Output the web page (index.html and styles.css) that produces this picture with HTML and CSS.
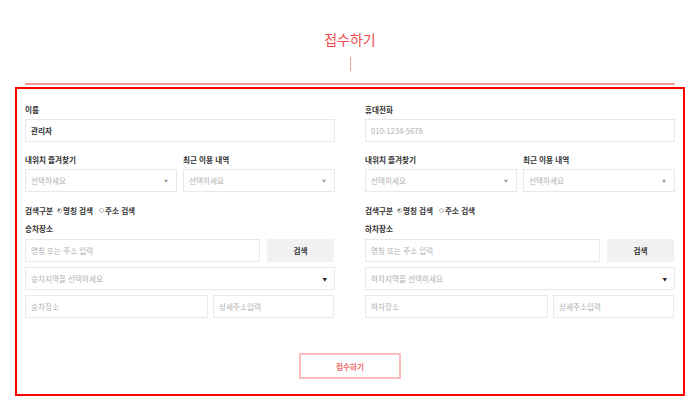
FILE: index.html
```html
<!DOCTYPE html>
<html lang="ko">
<head>
<meta charset="utf-8">
<title>접수하기</title>
<link rel="stylesheet" href="styles.css">
</head>
<body>
<div class="header">
  <h1 class="title">접수하기</h1>
  <div class="vline"></div>
  <div class="hline"></div>
</div>
<form class="box">
  <div class="columns">
    <div class="col">
      <div class="label">이름</div>
      <input class="field name" type="text" value="관리자">
      <div class="pair">
        <div>
          <div class="label mt12">내위치 즐겨찾기</div>
          <div class="select"><span class="ph">선택하세요</span><span class="arr">▼</span></div>
        </div>
        <div>
          <div class="label mt12">최근 이용 내역</div>
          <div class="select"><span class="ph">선택하세요</span><span class="arr">▼</span></div>
        </div>
      </div>
      <div class="radios">
        <span class="rlabel">검색구분</span>
        <span class="radio on"></span><span>명칭 검색</span>
        <span class="radio second"></span><span>주소 검색</span>
      </div>
      <div class="label mt7">승차장소</div>
      <div class="search">
        <input class="field" type="text" placeholder="명칭 또는 주소 입력">
        <button type="button" class="sbtn">검색</button>
      </div>
      <div class="select big"><span class="ph">승차지역을 선택하세요</span><span class="arr dark">▼</span></div>
      <div class="addr">
        <input class="field" type="text" placeholder="승차장소">
        <input class="field" type="text" placeholder="상세주소입력">
      </div>
    </div>
    <div class="col">
      <div class="label">휴대전화</div>
      <input class="field" type="text" placeholder="010-1234-5678">
      <div class="pair">
        <div>
          <div class="label mt12">내위치 즐겨찾기</div>
          <div class="select"><span class="ph">선택하세요</span><span class="arr">▼</span></div>
        </div>
        <div>
          <div class="label mt12">최근 이용 내역</div>
          <div class="select"><span class="ph">선택하세요</span><span class="arr">▼</span></div>
        </div>
      </div>
      <div class="radios">
        <span class="rlabel">검색구분</span>
        <span class="radio on"></span><span>명칭 검색</span>
        <span class="radio second"></span><span>주소 검색</span>
      </div>
      <div class="label mt7">하차장소</div>
      <div class="search">
        <input class="field" type="text" placeholder="명칭 또는 주소 입력">
        <button type="button" class="sbtn">검색</button>
      </div>
      <div class="select big"><span class="ph">하차지역을 선택하세요</span><span class="arr dark">▼</span></div>
      <div class="addr">
        <input class="field" type="text" placeholder="하차장소">
        <input class="field" type="text" placeholder="상세주소입력">
      </div>
    </div>
  </div>
  <div class="submit-wrap">
    <button type="button" class="submit">접수하기</button>
  </div>
</form>
</body>
</html>
```

FILE: styles.css
```css
* { box-sizing: border-box; }
html, body { margin: 0; padding: 0; background: #fff; }
body {
  font-family: "Noto Sans CJK KR", "Noto Sans", sans-serif;
  color: #333;
  width: 700px;
}
.header {
  display: flex;
  flex-direction: column;
  align-items: center;
  padding-top: 29px;
}
.title {
  margin: 0;
  font-size: 14px;
  line-height: 20px;
  font-weight: 400;
  color: #ef4a4f;
}
.vline {
  width: 1px;
  height: 14px;
  margin-top: 8px;
  background: #f2a0a0;
}
.hline {
  align-self: stretch;
  margin: 12px 25px 0;
  height: 2px;
  background: #f59b9b;
}
.box {
  margin: 2px 15px 0;
  border: 2px solid #ff0000;
  padding: 15px 8px 15px;
  height: 309px;
}
.columns {
  display: grid;
  grid-template-columns: 310px 310px;
  column-gap: 30px;
}
.col { display: flex; flex-direction: column; }
.label {
  font-size: 7.6px;
  line-height: 12px;
  font-weight: 700;
  color: #333;
  margin-bottom: 3px;
}
.mt12 { margin-top: 12px; }
.mt7 { margin-top: 7px; margin-bottom: 4px; }
.field {
  display: block;
  width: 100%;
  height: 23px;
  border: 1px solid #e8e8e8;
  padding: 0 5px;
  font-family: inherit;
  font-size: 7.6px;
  color: #333;
  outline: none;
  background: #fff;
  margin: 0;
}
.field::placeholder { color: #b0b0b0; }
.field.name { font-weight: 700; color: #333; }
.pair {
  display: grid;
  grid-template-columns: 1fr 1fr;
  column-gap: 6px;
}
.select {
  display: flex;
  align-items: center;
  justify-content: space-between;
  height: 23px;
  border: 1px solid #e8e8e8;
  padding: 0 5px 0 5px;
  font-size: 7.6px;
}
.ph { color: #b0b0b0; }
.arr {
  font-size: 4px;
  color: #999;
  padding-right: 3px;
}
.arr.dark {
  font-size: 4.5px;
  color: #222;
  padding-right: 2px;
}
.radios {
  display: flex;
  align-items: center;
  margin-top: 12px;
  height: 12px;
  font-size: 7.6px;
  font-weight: 700;
  color: #333;
}
.rlabel { margin-right: 2px; }
.radio {
  width: 5px;
  height: 5px;
  border: 1px solid #b5b5b5;
  border-radius: 50%;
  margin: 0 1px 0 2px;
  background: #fff;
  position: relative;
}
.radio.second { margin-left: 6px; }
.radio.on::after {
  content: "";
  position: absolute;
  left: 0.5px;
  top: 0.5px;
  width: 2px;
  height: 2px;
  border-radius: 50%;
  background: #555;
}
.search {
  display: flex;
  column-gap: 7px;
  padding-right: 1px;
}
.search .field { flex: 1; }
.sbtn {
  width: 67px;
  height: 23px;
  border: none;
  background: #f1f1f1;
  font-family: inherit;
  font-size: 7.6px;
  font-weight: 700;
  color: #333;
  padding: 0;
}
.select.big { margin-top: 5px; }
.addr {
  display: grid;
  grid-template-columns: 183px 1fr;
  column-gap: 5px;
  margin-top: 5px;
  padding-right: 1px;
}
.submit-wrap {
  display: flex;
  justify-content: center;
  margin-top: 35px;
}
.submit {
  width: 102px;
  height: 26px;
  border: 2px solid #fbbcbc;
  background: #fff;
  font-family: inherit;
  font-size: 7.6px;
  font-weight: 700;
  color: #ef6a6a;
  padding: 0;
}
```
